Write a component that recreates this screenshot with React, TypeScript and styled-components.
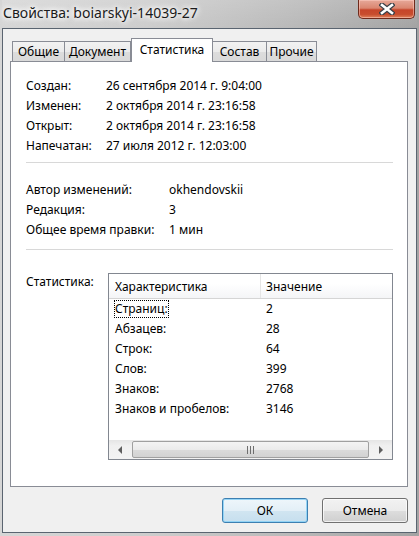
import React from "react";
import styled, { createGlobalStyle } from "styled-components";

const GlobalStyle = createGlobalStyle`
  html, body {
    margin: 0;
    padding: 0;
    background: #c4c4c4;
  }
  body {
    font-family: "Noto Sans", "Liberation Sans", sans-serif;
    font-size: 12px;
    color: #000;
  }
`;

const dates = [
  { label: "Создан:", value: "26 сентября 2014 г. 9:04:00" },
  { label: "Изменен:", value: "2 октября 2014 г. 23:16:58" },
  { label: "Открыт:", value: "2 октября 2014 г. 23:16:58" },
  { label: "Напечатан:", value: "27 июля 2012 г. 12:03:00" },
];

const edits = [
  { label: "Автор изменений:", value: "okhendovskii" },
  { label: "Редакция:", value: "3" },
  { label: "Общее время правки:", value: "1 мин" },
];

const stats = [
  { name: "Страниц:", value: "2" },
  { name: "Абзацев:", value: "28" },
  { name: "Строк:", value: "64" },
  { name: "Слов:", value: "399" },
  { name: "Знаков:", value: "2768" },
  { name: "Знаков и пробелов:", value: "3146" },
];

const tabs = [
  { title: "Общие", width: 53 },
  { title: "Документ", width: 67 },
  { title: "Статистика", width: 82, active: true },
  { title: "Состав", width: 55 },
  { title: "Прочие", width: 51 },
];

export default function App() {
  return (
    <>
      <GlobalStyle />
      <Window>
        <TitleBar>
          <Title>Свойства: boiarskyi-14039-27</Title>
          <CloseButton>
            <svg width="16" height="12" viewBox="0 0 16 12">
              <path d="M3 2 L13 10 M13 2 L3 10" stroke="#3a3f47" strokeWidth="5" strokeLinecap="square" />
              <path d="M3 2 L13 10 M13 2 L3 10" stroke="#ffffff" strokeWidth="2.6" strokeLinecap="square" />
            </svg>
          </CloseButton>
        </TitleBar>
        <Client>
          <TabStrip>
            {tabs.map((t) => (
              <Tab key={t.title} $w={t.width} $active={!!t.active}>
                {t.title}
              </Tab>
            ))}
          </TabStrip>
          <Panel>
            <InfoGroup $labelW={80}>
              {dates.map((d) => (
                <React.Fragment key={d.label}>
                  <InfoText>{d.label}</InfoText>
                  <InfoText>{d.value}</InfoText>
                </React.Fragment>
              ))}
            </InfoGroup>
            <Separator $top={6} />
            <InfoGroup $labelW={143} $top={17}>
              {edits.map((d) => (
                <React.Fragment key={d.label}>
                  <InfoText>{d.label}</InfoText>
                  <InfoText>{d.value}</InfoText>
                </React.Fragment>
              ))}
            </InfoGroup>
            <Separator $top={9} />
            <StatsRow>
              <StatsLabel>Статистика:</StatsLabel>
              <ListView>
                <ListHeader>
                  <HeaderCell $w={152}>Характеристика</HeaderCell>
                  <HeaderCell $w={131} $last>
                    Значение
                  </HeaderCell>
                </ListHeader>
                {stats.map((s, i) => (
                  <ListRow key={s.name}>
                    <NameCell>
                      <FocusText $focused={i === 0}>{s.name}</FocusText>
                    </NameCell>
                    <ValueCell>{s.value}</ValueCell>
                  </ListRow>
                ))}
                <Filler />
                <HScroll>
                  <ScrollArrow>
                    <svg width="5" height="8" viewBox="0 0 5 8">
                      <polygon points="4,0 4,8 0,4" fill="#5e5e5e" />
                    </svg>
                  </ScrollArrow>
                  <ScrollThumb>
                    <svg width="9" height="8" viewBox="0 0 9 8">
                      <path d="M1.5 0 V8 M4.5 0 V8 M7.5 0 V8" stroke="#6e6e6e" strokeWidth="1" />
                    </svg>
                  </ScrollThumb>
                  <ScrollArrow>
                    <svg width="5" height="8" viewBox="0 0 5 8">
                      <polygon points="1,0 1,8 5,4" fill="#5e5e5e" />
                    </svg>
                  </ScrollArrow>
                </HScroll>
              </ListView>
            </StatsRow>
          </Panel>
          <ButtonBar>
            <DialogButton $default>ОК</DialogButton>
            <DialogButton>Отмена</DialogButton>
          </ButtonBar>
        </Client>
      </Window>
    </>
  );
}

const Window = styled.div`
  width: 419px;
  height: 536px;
  box-sizing: border-box;
  padding: 0 2px 3px 2px;
  display: flex;
  flex-direction: column;
  background: linear-gradient(90deg, #d6d6d6 0%, #cdcdcd 35%, #b9b9b9 70%, #a3a3a3 100%);
`;

const TitleBar = styled.div`
  height: 28px;
  display: flex;
  justify-content: space-between;
  align-items: flex-start;
  background: linear-gradient(180deg, rgba(255, 255, 255, 0.15), rgba(255, 255, 255, 0));
`;

const Title = styled.div`
  margin: 4px 0 0 1px;
  font-family: "Noto Sans", sans-serif;
  font-size: 14px;
  line-height: 18px;
  color: #1b1b1b;
  text-shadow: 0 0 8px #fff, 0 0 6px #fff, 0 0 4px #fff;
`;

const CloseButton = styled.div`
  width: 57px;
  height: 19px;
  margin-right: 2px;
  box-sizing: border-box;
  border: 1px solid #6e2a1c;
  border-top: none;
  border-radius: 0 0 5px 5px;
  display: flex;
  align-items: center;
  justify-content: center;
  background: linear-gradient(
    180deg,
    #e6a899 0%,
    #da8670 45%,
    #c6452a 55%,
    #c84d2e 80%,
    #e0835c 100%
  );
  box-shadow: inset 0 0 0 1px rgba(255, 210, 200, 0.5);
`;

const Client = styled.div`
  flex: 1;
  box-sizing: border-box;
  border: 1px solid #5a6470;
  background: #f0f0f0;
  padding: 9px 8px 0 7px;
  display: flex;
  flex-direction: column;
`;

const TabStrip = styled.div`
  height: 23px;
  display: flex;
  align-items: flex-end;
  padding-left: 2px;
`;

const Tab = styled.div<{ $w: number; $active: boolean }>`
  width: ${(p) => p.$w}px;
  height: ${(p) => (p.$active ? 24 : 20)}px;
  margin-bottom: ${(p) => (p.$active ? -1 : 0)}px;
  box-sizing: border-box;
  border: 1px solid #898c95;
  border-bottom: none;
  margin-left: ${(p) => (p.$active ? 0 : -1)}px;
  position: relative;
  z-index: ${(p) => (p.$active ? 2 : 0)};
  display: flex;
  justify-content: center;
  padding-top: ${(p) => (p.$active ? 2 : 1)}px;
  line-height: 17px;
  white-space: nowrap;
  background: ${(p) =>
    p.$active ? "#ffffff" : "linear-gradient(180deg, #f2f2f2 0%, #ebebeb 50%, #dddddd 51%, #d9d9d9 100%)"};
  &:first-child {
    margin-left: 0;
  }
`;

const Panel = styled.div`
  height: 426px;
  box-sizing: border-box;
  border: 1px solid #898c95;
  background: #fff;
  position: relative;
  z-index: 1;
  padding: 14px 14px 0 15px;
  display: flex;
  flex-direction: column;
`;

const InfoGroup = styled.div<{ $labelW: number; $top?: number }>`
  display: grid;
  grid-template-columns: ${(p) => p.$labelW}px 1fr;
  grid-auto-rows: 20px;
  margin-top: ${(p) => p.$top ?? 0}px;
`;

const InfoText = styled.div`
  line-height: 20px;
  white-space: nowrap;
`;

const Separator = styled.div<{ $top: number }>`
  height: 1px;
  margin-top: ${(p) => p.$top}px;
  background: #d8d8d8;
`;

const StatsRow = styled.div`
  display: flex;
  margin-top: 23px;
`;

const StatsLabel = styled.div`
  width: 82px;
  padding-top: 1px;
  line-height: 16px;
`;

const ListView = styled.div`
  width: 285px;
  height: 187px;
  box-sizing: border-box;
  border: 1px solid #828790;
  display: flex;
  flex-direction: column;
  overflow: hidden;
`;

const ListHeader = styled.div`
  height: 25px;
  flex-shrink: 0;
  display: flex;
  box-sizing: border-box;
  border-bottom: 1px solid #d5d5d5;
  background: linear-gradient(180deg, #ffffff 0%, #ffffff 40%, #f4f5f7 100%);
`;

const HeaderCell = styled.div<{ $w: number; $last?: boolean }>`
  width: ${(p) => p.$w}px;
  flex-shrink: 0;
  box-sizing: border-box;
  padding-left: ${(p) => (p.$last ? 5 : 6)}px;
  padding-top: 2px;
  line-height: 22px;
  border-right: ${(p) => (p.$last ? "none" : "1px solid #e5e5e5")};
`;

const ListRow = styled.div`
  height: 20px;
  flex-shrink: 0;
  display: flex;
  align-items: center;
`;

const NameCell = styled.div`
  width: 152px;
  box-sizing: border-box;
  padding-left: 5px;
  white-space: nowrap;
`;

const ValueCell = styled.div`
  padding-left: 5px;
  line-height: 18px;
`;

const FocusText = styled.span<{ $focused: boolean }>`
  display: inline-block;
  line-height: 16px;
  border: 1px ${(p) => (p.$focused ? "dotted #000" : "solid transparent")};
`;

const Filler = styled.div`
  flex: 1;
`;

const HScroll = styled.div`
  height: 19px;
  flex-shrink: 0;
  display: flex;
  align-items: stretch;
  background: linear-gradient(180deg, #e5e5e5 0%, #f0f0f0 30%, #f3f3f3 100%);
`;

const ScrollArrow = styled.div`
  width: 23px;
  display: flex;
  align-items: center;
  justify-content: center;
`;

const ScrollThumb = styled.div`
  flex: 1;
  margin: 1px 0;
  box-sizing: border-box;
  border: 1px solid #a0a0a0;
  border-radius: 2px;
  display: flex;
  align-items: center;
  justify-content: center;
  background: linear-gradient(180deg, #f4f4f4 0%, #ebebeb 50%, #dbdbdb 51%, #d2d2d2 100%);
`;

const ButtonBar = styled.div`
  display: flex;
  justify-content: flex-end;
  gap: 14px;
  margin-top: 11px;
`;

const DialogButton = styled.button<{ $default?: boolean }>`
  width: 86px;
  height: 25px;
  box-sizing: border-box;
  border-radius: 3px;
  font-family: "Noto Sans", "Liberation Sans", sans-serif;
  font-size: 12px;
  color: #000;
  padding: 0;
  border: 1px solid ${(p) => (p.$default ? "#3c7fb1" : "#707070")};
  background: ${(p) =>
    p.$default
      ? "linear-gradient(180deg, #eef6fb 0%, #e3eff7 50%, #d1e5f1 51%, #c6dfee 100%)"
      : "linear-gradient(180deg, #f2f2f2 0%, #ebebeb 50%, #dddddd 51%, #cfcfcf 100%)"};
  box-shadow: inset 0 0 0 1px ${(p) => (p.$default ? "rgba(140, 210, 245, 0.9)" : "rgba(255, 255, 255, 0.7)")};
`;
